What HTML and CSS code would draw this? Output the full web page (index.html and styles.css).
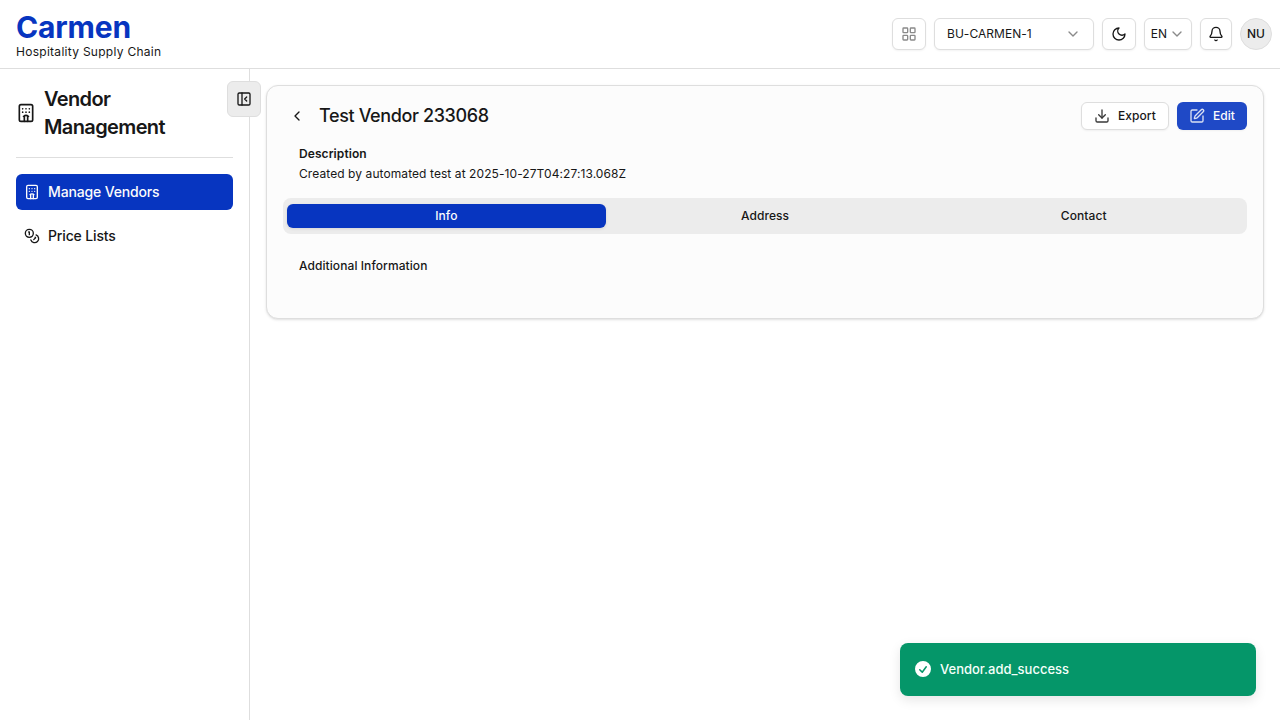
FILE: index.html
```html
<!DOCTYPE html>
<html lang="en">
<head>
<meta charset="utf-8">
<title>Carmen - Vendor Management</title>
<link rel="stylesheet" href="styles.css">
</head>
<body>
<header class="topbar">
  <div class="brand">
    <div class="brand-name">Carmen</div>
    <div class="brand-sub">Hospitality Supply Chain</div>
  </div>
  <div class="tools">
    <button class="box apps"><svg class="icon muted" viewBox="0 0 24 24"><rect width="7" height="7" x="3" y="3" rx="1"/><rect width="7" height="7" x="14" y="3" rx="1"/><rect width="7" height="7" x="14" y="14" rx="1"/><rect width="7" height="7" x="3" y="14" rx="1"/></svg></button>
    <button class="box unit"><span>BU-CARMEN-1</span><svg class="icon faint" viewBox="0 0 24 24"><path d="m6 9 6 6 6-6"/></svg></button>
    <button class="box theme"><svg class="icon" viewBox="0 0 24 24"><path d="M12 3a6 6 0 0 0 9 9 9 9 0 1 1-9-9Z"/></svg></button>
    <button class="box lang"><span>EN</span><svg class="icon faint" viewBox="0 0 24 24"><path d="m6 9 6 6 6-6"/></svg></button>
    <button class="box bell"><svg class="icon" viewBox="0 0 24 24"><path d="M10.268 21a2 2 0 0 0 3.464 0"/><path d="M3.262 15.326A1 1 0 0 0 4 17h16a1 1 0 0 0 .74-1.673C19.41 13.956 18 12.499 18 8A6 6 0 0 0 6 8c0 4.499-1.411 5.956-2.738 7.326"/></svg></button>
    <div class="avatar">NU</div>
  </div>
</header>
<div class="body">
  <aside class="sidebar">
    <button class="collapse"><svg class="icon" viewBox="0 0 24 24"><rect width="18" height="18" x="3" y="3" rx="2"/><path d="M9 3v18"/><path d="m16 15-3-3 3-3"/></svg></button>
    <div class="module">
      <svg class="icon building" viewBox="0 0 24 24"><path d="M10 22v-6.57M12 11h.01M12 7h.01M14 15.43V22M15 16a5 5 0 0 0-6 0M16 11h.01M16 7h.01M8 11h.01M8 7h.01"/><rect width="16" height="20" x="4" y="2" rx="2"/></svg>
      <h2>Vendor Management</h2>
    </div>
    <nav>
      <a class="link active"><svg class="icon" viewBox="0 0 24 24"><path d="M10 22v-6.57M12 11h.01M12 7h.01M14 15.43V22M15 16a5 5 0 0 0-6 0M16 11h.01M16 7h.01M8 11h.01M8 7h.01"/><rect width="16" height="20" x="4" y="2" rx="2"/></svg>Manage Vendors</a>
      <a class="link"><svg class="icon" viewBox="0 0 24 24"><circle cx="8" cy="8" r="6"/><path d="M18.09 10.37A6 6 0 1 1 10.34 18"/><path d="M7 6h1v4"/><path d="m16.71 13.88.7.71-2.82 2.82"/></svg>Price Lists</a>
    </nav>
  </aside>
  <main class="main">
    <section class="card">
      <div class="head">
        <svg class="icon back" viewBox="0 0 24 24"><path d="m15 18-6-6 6-6"/></svg>
        <h1>Test Vendor 233068</h1>
        <button class="btn"><svg class="icon" viewBox="0 0 24 24"><path d="M12 15V3"/><path d="M21 15v4a2 2 0 0 1-2 2H5a2 2 0 0 1-2-2v-4"/><path d="m7 10 5 5 5-5"/></svg>Export</button>
        <button class="btn primary"><svg class="icon" viewBox="0 0 24 24"><path d="M12 3H5a2 2 0 0 0-2 2v14a2 2 0 0 0 2 2h14a2 2 0 0 0 2-2v-7"/><path d="M18.375 2.625a1 1 0 0 1 3 3l-9.013 9.014a2 2 0 0 1-.853.505l-2.873.84a.5.5 0 0 1-.62-.62l.84-2.873a2 2 0 0 1 .506-.852z"/></svg>Edit</button>
      </div>
      <div class="desc">
        <div class="desc-label">Description</div>
        <div class="desc-text">Created by automated test at 2025-10-27T04:27:13.068Z</div>
      </div>
      <div class="tabs"><div class="tab on">Info</div><div class="tab">Address</div><div class="tab">Contact</div></div>
      <div class="extra">Additional Information</div>
    </section>
  </main>
</div>
<div class="toast"><svg class="check" viewBox="0 0 20 20"><path fill-rule="evenodd" d="M10 18a8 8 0 100-16 8 8 0 000 16zm3.857-9.809a.75.75 0 00-1.214-.882l-3.483 4.79-1.88-1.88a.75.75 0 10-1.06 1.061l2.5 2.5a.75.75 0 001.137-.089l4-5.5z" clip-rule="evenodd"/></svg><span>Vendor.add_success</span></div>
</body>
</html>
```
FILE: styles.css
```css
* { box-sizing: border-box; margin: 0; }
body { height: 720px; display: flex; flex-direction: column; overflow: hidden; background: #fff; color: #171717; font: 400 12px/16px Inter, "Liberation Sans", sans-serif; letter-spacing: 0.08px; }
button { font: inherit; color: inherit; letter-spacing: inherit; padding: 0; }
.icon { width: 16px; height: 16px; flex: none; fill: none; stroke: currentColor; stroke-width: 2; stroke-linecap: round; stroke-linejoin: round; }
.muted { opacity: .5; }
.faint { opacity: .5; }
.topbar { height: 69px; flex: none; display: flex; justify-content: space-between; align-items: center; padding: 0 8px 0 16px; border-bottom: 1px solid #dedede; }
.brand-name { font-size: 30px; line-height: 36px; font-weight: 700; letter-spacing: -0.15px; color: #0735c0; }
.brand-sub { letter-spacing: 0.28px; margin-top: -1px; }
.tools { display: flex; gap: 8px; align-items: center; }
.box { height: 32px; display: flex; align-items: center; justify-content: center; background: #fff; border: 1px solid #dedede; border-radius: 6px; box-shadow: 0 1px 2px rgba(0,0,0,.05); }
.apps, .theme { width: 34px; }
.unit { width: 160px; justify-content: space-between; padding: 0 12px; letter-spacing: 0.03px; }
.lang { width: 48px; gap: 2px; letter-spacing: 0; }
.bell { width: 32px; }
.avatar { width: 32px; height: 32px; border: 1px solid #dedede; border-radius: 50%; background: #ececec; display: flex; align-items: center; justify-content: center; font-weight: 500; }
.body { flex: 1; display: flex; min-height: 0; }
.sidebar { position: relative; width: 250px; flex: none; border-right: 1px solid #dedede; padding: 16px; }
.collapse { position: absolute; top: 12px; right: -12px; width: 34px; height: 36px; display: flex; align-items: center; justify-content: center; background: #ececec; border: 1px solid #dedede; border-radius: 6px; }
.module { display: flex; align-items: center; gap: 8px; padding-bottom: 16px; border-bottom: 1px solid #dedede; }
.building { width: 20px; height: 20px; }
.module h2 { font-size: 20px; line-height: 28px; font-weight: 600; letter-spacing: -0.62px; }
nav { display: flex; flex-direction: column; gap: 8px; margin-top: 16px; }
.link { display: flex; align-items: center; gap: 8px; height: 36px; padding: 0 8px; border-radius: 6px; font-size: 14px; line-height: 20px; font-weight: 500; letter-spacing: -0.15px; }
.active { background: #0735c0; color: #fcfcfc; }
.main { flex: 1; padding: 16px; }
.card { height: 234px; padding: 16px; background: #fcfcfc; border: 1px solid #dedede; border-radius: 12px; box-shadow: 0 1px 3px rgba(0,0,0,.1), 0 1px 2px -1px rgba(0,0,0,.1); }
.head { display: flex; align-items: center; gap: 8px; height: 28px; }
.back { margin: 0 6px; }
.head h1 { flex: 1; font-size: 18px; line-height: 28px; font-weight: 500; letter-spacing: -0.38px; }
.btn { height: 28px; display: flex; align-items: center; gap: 8px; padding: 0 12px; font-weight: 500; background: #fff; border: 1px solid #dedede; border-radius: 6px; box-shadow: 0 1px 2px rgba(0,0,0,.05); }
.btn .icon { opacity: .85; }
.primary { background: #1f49c6; color: #fcfcfc; border: 0; }
.desc { padding: 16px 16px 0; }
.desc-label { font-weight: 600; }
.desc-text { margin-top: 4px; }
.tabs { display: flex; align-items: center; height: 36px; margin-top: 16px; padding: 4px; border-radius: 8px; background: #ececec; }
.tab { flex: 1; height: 24px; line-height: 24px; border-radius: 6px; text-align: center; font-weight: 500; }
.on { background: #0735c0; color: #fcfcfc; box-shadow: 0 1px 3px rgba(0,0,0,.1); }
.extra { padding: 24px 16px 0; font-weight: 500; }
.toast { position: absolute; right: 24px; bottom: 24px; width: 356px; height: 53px; display: flex; align-items: center; gap: 7px; padding: 0 13px 1px; border-radius: 8px; background: #059669; color: #f5fffa; font-size: 13px; font-weight: 500; letter-spacing: 0; box-shadow: 0 4px 12px rgba(0,0,0,.1); }
.check { width: 20px; height: 20px; fill: #fff; }
```
